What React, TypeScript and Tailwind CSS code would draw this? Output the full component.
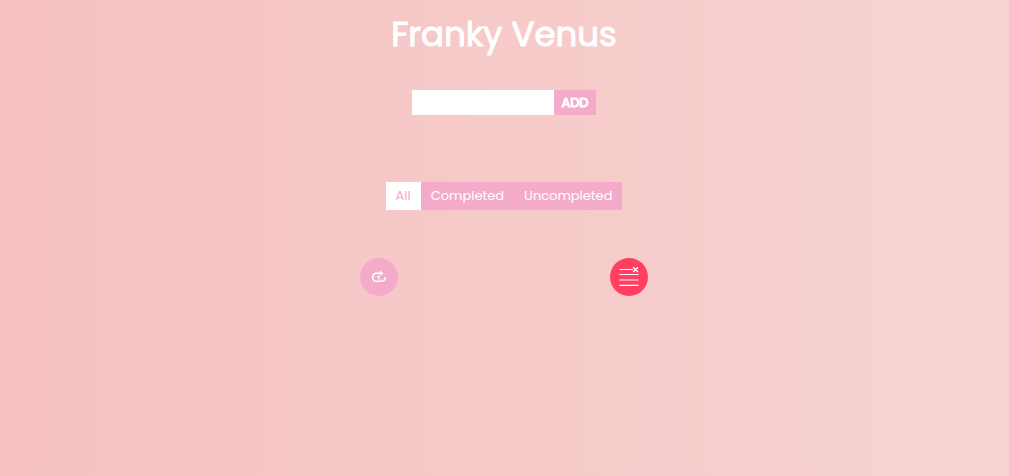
import { useState } from "react";
import type { FormEvent } from "react";

const filters = ["All", "Completed", "Uncompleted"];

function RedoIcon() {
  return (
    <svg width="16" height="14" viewBox="0 0 16 14" fill="none" stroke="currentColor" aria-hidden="true">
      <path d="M10 3.2H5.6C3.2 3.2 1.7 5 1.7 7.2s1.5 4.1 3.9 4.1h4.2c2.6 0 4.3-1.3 4.5-3.9" strokeWidth="1.5" strokeLinecap="round" />
      <path d="M9.3 1l2.8 2.2-2.8 2.3z" fill="currentColor" strokeWidth="0.6" />
      <path d="M6.2 6.5h2M7.9 5.6v3.9" strokeWidth="1.2" />
    </svg>
  );
}

function ClearListIcon() {
  return (
    <svg width="20" height="20" viewBox="0 0 20 20" fill="none" stroke="currentColor" aria-hidden="true">
      <path d="M0.5 2.5h13.5M0.5 7.5h19M0.5 13h19M0.5 18.3h19" strokeWidth="1.2" />
      <path d="M14.2 0.2l4.8 4.8M19 0.2l-4.8 4.8" strokeWidth="1.4" />
    </svg>
  );
}

export default function App() {
  const [text, setText] = useState("");
  const [tasks, setTasks] = useState<string[]>([]);
  const [active, setActive] = useState("All");

  const add = (event: FormEvent) => {
    event.preventDefault();
    if (!text.trim()) return;
    setTasks([...tasks, text.trim()]);
    setText("");
  };

  return (
    <main className="flex min-h-screen flex-col items-center bg-linear-to-r/srgb from-[#f5c1c1] to-[#f7d4d2] pt-3 pr-px font-[Poppins,Inter,sans-serif] text-white">
      <h1 className="text-[34px] leading-11 font-normal [-webkit-text-stroke:1px_white]">Franky Venus</h1>

      <form onSubmit={add} className="mt-[34px] flex h-[25px]">
        <input
          type="text"
          aria-label="New task"
          value={text}
          onChange={(event) => setText(event.target.value)}
          className="w-[142px] bg-white px-2 text-[13px] text-[#f4abc9] outline-none"
        />
        <button type="submit" className="w-[42px] bg-[#f4abc9] text-[13px] leading-5 [-webkit-text-stroke:1px_white]">
          ADD
        </button>
      </form>

      <div className="mt-[67px] flex h-7">
        {filters.map((name) => (
          <button
            key={name}
            type="button"
            aria-pressed={active === name}
            onClick={() => setActive(name)}
            className={
              active === name
                ? "bg-white px-[10px] text-[13px] leading-5 text-[#f4abc9]"
                : "bg-[#f4abc9] px-[10px] text-[13px] leading-5"
            }
          >
            {name}
          </button>
        ))}
      </div>

      {tasks.length > 0 && (
        <ul className="mt-6 w-72 space-y-2 text-center text-sm">
          {tasks.map((task, index) => (
            <li key={index}>{task}</li>
          ))}
        </ul>
      )}

      <div className="mt-12 flex w-72 justify-between">
        <button
          type="button"
          aria-label="Undo"
          className="flex size-[38px] items-center justify-center rounded-full bg-[#f4abc9]"
        >
          <RedoIcon />
        </button>
        <button
          type="button"
          aria-label="Clear all"
          onClick={() => setTasks([])}
          className="flex size-[38px] items-center justify-center rounded-full bg-[#ff4062]"
        >
          <ClearListIcon />
        </button>
      </div>
    </main>
  );
}
